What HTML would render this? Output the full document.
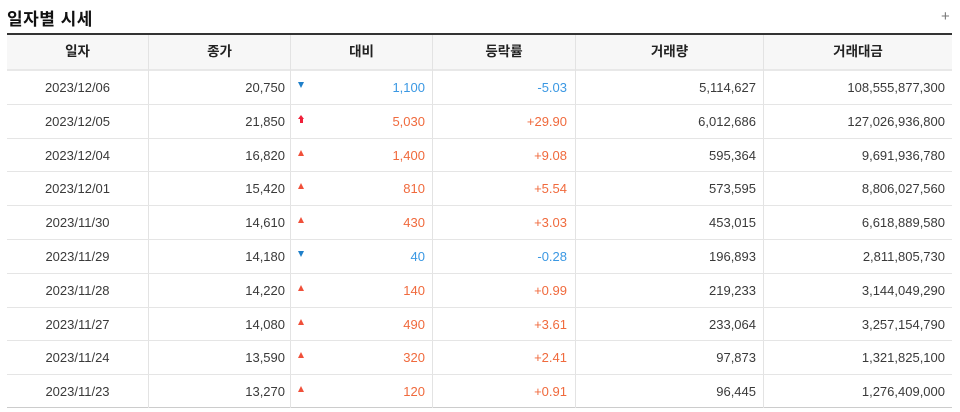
<!DOCTYPE html>
<html><head><meta charset="utf-8"><style>
body{margin:0;width:960px;height:412px;background:#fff;overflow:hidden;font-family:"Liberation Sans","Noto Sans CJK KR",sans-serif;position:relative}
.t{position:absolute;left:7px;top:5px;font-size:17px;font-weight:bold;color:#111;letter-spacing:0.5px}
.plus{position:absolute;left:941px;top:10px;font-size:15px;color:#777;line-height:14px;font-weight:300}
.top{position:absolute;left:7px;top:33px;width:945px;height:2px;background:#333}
.hd{position:absolute;left:7px;top:35px;width:945px;height:34px;background:#f7f7f7}
.c{position:absolute;font-size:13px;color:#3a3a3a;line-height:34px;height:34px;white-space:nowrap}
.h{font-weight:bold;color:#222;text-align:center;font-size:13.5px}
.hl{position:absolute;left:7px;width:945px;height:1px;background:#e5e5e5}
.vl{position:absolute;top:35px;width:1px;height:373px;background:#e3e3e3}
.b{color:#3b98e3}.r{color:#f06a3d}
.ar{position:absolute;width:0;height:0}
</style></head><body>
<div class="t">일자별 시세</div>
<div class="plus">+</div>
<div class="top"></div>
<div class="hd"></div>
<div class="hl" style="top:69px;height:2px;background:#e8e8e8"></div>
<div class="hl" style="top:407px;background:#ccc"></div>
<div class="vl" style="left:148px"></div>
<div class="vl" style="left:290px"></div>
<div class="vl" style="left:432px"></div>
<div class="vl" style="left:575px"></div>
<div class="vl" style="left:763px"></div>
<div class="c h" style="left:7px;width:141px;top:35px">일자</div>
<div class="c h" style="left:149px;width:141px;top:35px">종가</div>
<div class="c h" style="left:291px;width:141px;top:35px">대비</div>
<div class="c h" style="left:433px;width:142px;top:35px">등락률</div>
<div class="c h" style="left:576px;width:187px;top:35px">거래량</div>
<div class="c h" style="left:764px;width:188px;top:35px">거래대금</div>
<div id="rows"></div>
<script>
var d=[["2023/12/06","20,750","d","1,100","-5.03","5,114,627","108,555,877,300"],
["2023/12/05","21,850","u2","5,030","+29.90","6,012,686","127,026,936,800"],
["2023/12/04","16,820","u","1,400","+9.08","595,364","9,691,936,780"],
["2023/12/01","15,420","u","810","+5.54","573,595","8,806,027,560"],
["2023/11/30","14,610","u","430","+3.03","453,015","6,618,889,580"],
["2023/11/29","14,180","d","40","-0.28","196,893","2,811,805,730"],
["2023/11/28","14,220","u","140","+0.99","219,233","3,144,049,290"],
["2023/11/27","14,080","u","490","+3.61","233,064","3,257,154,790"],
["2023/11/24","13,590","u","320","+2.41","97,873","1,321,825,100"],
["2023/11/23","13,270","u","120","+0.91","96,445","1,276,409,000"]];
var h="";
d.forEach(function(r,i){var y=Math.round(71+i*33.8);var cl=r[2]=="d"?"b":"r";
if(i>0)h+='<div class="hl" style="top:'+(y-1)+'px"></div>';
h+='<div class="c" style="left:7px;width:141px;top:'+y+'px;text-align:center">'+r[0]+'</div>';
h+='<div class="c" style="left:149px;width:136px;top:'+y+'px;text-align:right">'+r[1]+'</div>';
h+='<div class="c '+cl+'" style="left:291px;width:134px;top:'+y+'px;text-align:right">'+r[3]+'</div>';
h+='<div class="c '+cl+'" style="left:433px;width:134px;top:'+y+'px;text-align:right">'+r[4]+'</div>';
h+='<div class="c" style="left:576px;width:180px;top:'+y+'px;text-align:right">'+r[5]+'</div>';
h+='<div class="c" style="left:764px;width:181px;top:'+y+'px;text-align:right">'+r[6]+'</div>';
if(r[2]=="d")h+='<div class="ar" style="left:298px;top:'+(y+11)+'px;border-left:3.5px solid transparent;border-right:3.5px solid transparent;border-top:6px solid #1f7fc9"></div>';
else if(r[2]=="u")h+='<div class="ar" style="left:298px;top:'+(y+11)+'px;border-left:3.5px solid transparent;border-right:3.5px solid transparent;border-bottom:6px solid #f0503a"></div>';
else h+='<div class="ar" style="left:298px;top:'+(y+10)+'px;border-left:3.5px solid transparent;border-right:3.5px solid transparent;border-bottom:4px solid #f0203a"></div><div class="ar" style="left:300px;top:'+(y+14)+'px;width:3px;height:4px;background:#f0203a"></div>';
});
document.getElementById("rows").innerHTML=h;
</script>
</body></html>
